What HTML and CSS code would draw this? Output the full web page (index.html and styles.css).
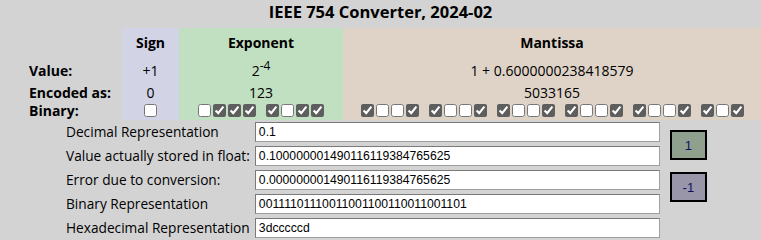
FILE: index.html
```html
<!DOCTYPE html>
<html lang="en">
<head>
  <meta charset="UTF-8">
  <title>IEEE 754 Converter</title>
  <link rel="stylesheet" href="styles.css">
</head>
<body>
  <h1 class="title">IEEE 754 Converter, 2024-02</h1>
  <table class="bits">
    <tr class="head">
      <td class="lbl"></td>
      <th class="sign">Sign</th>
      <th class="exp">Exponent</th>
      <th class="man">Mantissa</th>
    </tr>
    <tr class="value">
      <td class="lbl">Value:</td>
      <td class="sign">+1</td>
      <td class="exp">2<sup>-4</sup></td>
      <td class="man">1 + 0.6000000238418579</td>
    </tr>
    <tr class="encoded">
      <td class="lbl">Encoded as:</td>
      <td class="sign">0</td>
      <td class="exp">123</td>
      <td class="man">5033165</td>
    </tr>
    <tr class="binary">
      <td class="lbl">Binary:</td>
      <td class="sign"><div class="boxes" id="signBits"></div></td>
      <td class="exp"><div class="boxes" id="expBits"></div></td>
      <td class="man"><div class="boxes" id="manBits"></div></td>
    </tr>
  </table>

  <table class="reprs">
    <tr>
      <td class="rlabel">Decimal Representation</td>
      <td><input type="text" value="0.1"></td>
      <td class="btns" rowspan="5">
        <button class="plus">1</button>
        <button class="minus">-1</button>
      </td>
    </tr>
    <tr>
      <td class="rlabel">Value actually stored in float:</td>
      <td><input type="text" value="0.100000001490116119384765625"></td>
    </tr>
    <tr>
      <td class="rlabel">Error due to conversion:</td>
      <td><input type="text" value="0.000000001490116119384765625"></td>
    </tr>
    <tr>
      <td class="rlabel">Binary Representation</td>
      <td><input type="text" value="00111101110011001100110011001101"></td>
    </tr>
    <tr>
      <td class="rlabel">Hexadecimal Representation</td>
      <td><input type="text" value="3dcccccd"></td>
    </tr>
  </table>

  <script>
    // bits of 0x3dcccccd, grouped by four from the left
    const bits = '00111101110011001100110011001101';
    function fill(id, str) {
      const box = document.getElementById(id);
      for (let i = 0; i < str.length; i++) {
        if (i > 0 && i % 4 === 0) {
          const sp = document.createElement('span');
          sp.className = 'sep';
          box.appendChild(sp);
        }
        const cb = document.createElement('input');
        cb.type = 'checkbox';
        cb.checked = str[i] === '1';
        box.appendChild(cb);
      }
    }
    fill('signBits', bits.slice(0, 1));
    fill('expBits', bits.slice(1, 9));
    fill('manBits', bits.slice(9));
  </script>
</body>
</html>
```

FILE: styles.css
```css
body {
  margin: 0;
  background: #d3d3d3;
  font-family: "Open Sans", "Noto Sans", sans-serif;
  color: #000;
}
.title {
  margin: 0;
  height: 28px;
  line-height: 24px;
  text-align: center;
  font-size: 16.5px;
  font-weight: bold;
}
.bits {
  width: 100%;
  border-collapse: collapse;
  table-layout: fixed;
  font-size: 14px;
  line-height: 17px;
}
.bits td, .bits th {
  padding: 0;
  text-align: center;
}
.bits .lbl {
  width: 122px;
  padding-left: 29px;
  text-align: left;
  font-weight: bold;
  box-sizing: border-box;
}
.bits .sign {
  width: 57px;
  background: #d3d3e6;
}
.bits .exp {
  width: 164px;
  background: #c1dfc1;
}
.bits .man {
  background: #dfd3c7;
}
.head th, .head td {
  height: 29px;
}
.value td {
  height: 26px;
  padding-top: 1px;
  box-sizing: border-box;
}
.value sup {
  font-size: 12px;
  vertical-align: 6px;
  line-height: 0;
}
.encoded td {
  height: 18px;
}
.binary td {
  height: 19px;
}
.boxes {
  display: flex;
  justify-content: center;
  align-items: center;
  height: 19px;
}
.boxes input {
  width: 13px;
  height: 13px;
  margin: 0 1px;
  accent-color: #5e5e5e;
}
.boxes .sep {
  width: 8px;
}
.reprs {
  margin: 0 0 0 66px;
  border-collapse: collapse;
  font-size: 13.7px;
  line-height: 18px;
}
.reprs td {
  padding: 2px 0;
}
.rlabel {
  padding-right: 5px !important;
  white-space: nowrap;
}
.reprs input {
  display: block;
  width: 405px;
  height: 20px;
  box-sizing: border-box;
  margin: 0;
  padding: 1px 3px;
  border: 1px solid #7a7a7a;
  border-right-color: #a0a0a0;
  border-bottom-color: #a0a0a0;
  font-family: "Liberation Sans", Arial, sans-serif;
  font-size: 12.2px;
  background: #fff;
}
.btns {
  vertical-align: top;
  padding: 10px 0 0 10px !important;
}
.btns button {
  display: block;
  width: 37px;
  height: 30px;
  margin-bottom: 12px;
  border: 2px solid #000;
  font-family: "Liberation Sans", Arial, sans-serif;
  font-size: 13px;
  color: #101060;
  cursor: pointer;
}
.plus {
  background: #8fa08f;
}
.minus {
  background: #9896a8;
}
```
